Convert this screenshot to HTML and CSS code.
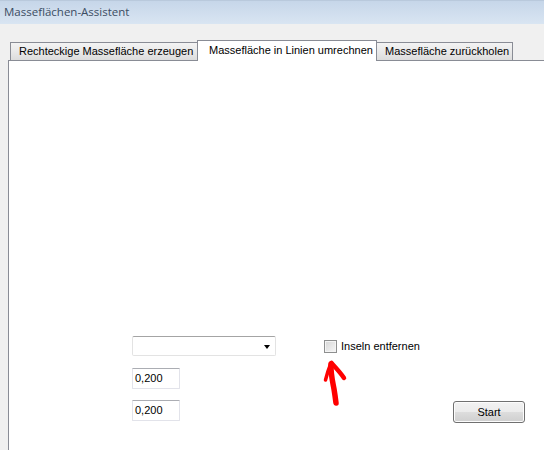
FILE: index.html
```html
<!DOCTYPE html>
<html>
<head>
<meta charset="utf-8">
<link rel="stylesheet" href="styles.css">
</head>
<body>
<div class="titlebar">Masseflächen-Assistent</div>
<div class="tabs">
  <div class="tabrow">
    <div class="tab first">Rechteckige Massefläche erzeugen</div>
    <div class="tab active">Massefläche in Linien umrechnen</div>
    <div class="tab">Massefläche zurückholen</div>
  </div>
  <div class="panel">
    <div class="form">
      <div class="combo"><span class="caret"></span></div>
      <label class="check"><span class="box"></span>Inseln entfernen</label>
      <div class="field r2">0,200</div>
      <div class="field r3">0,200</div>
      <div class="btn">Start</div>
    </div>
    <svg class="arrow" width="30" height="50" viewBox="0 0 30 50">
      <path d="M8 5 C7.5 14 9.5 22 11 30 C12 36 12.5 40 13 44" fill="none" stroke="#ff0000" stroke-width="5.5" stroke-linecap="round"/>
      <path d="M8 4 C6 9 4 15 2.5 21" fill="none" stroke="#ff0000" stroke-width="3.5" stroke-linecap="round"/>
      <path d="M8.5 4 C12 8 17 13 21 19" fill="none" stroke="#ff0000" stroke-width="4.5" stroke-linecap="round"/>
    </svg>
  </div>
</div>
</body>
</html>
```

FILE: styles.css
```css
html, body {
  margin: 0;
  padding: 0;
  height: 100%;
  overflow: hidden;
}
body {
  background: #f0f0f0;
  font-family: "Liberation Sans", Arial, sans-serif;
  font-size: 11px;
  color: #000;
  display: flex;
  flex-direction: column;
}
.titlebar {
  height: 24px;
  box-sizing: border-box;
  border-top: 1px solid #b9c9dc;
  background: linear-gradient(#c6d6e9, #d9e5f2);
  color: #3c4d63;
  font-family: "Open Sans", sans-serif;
  font-size: 11.5px;
  line-height: 22px;
  padding-left: 4px;
}
.tabs {
  flex: 1;
  display: flex;
  flex-direction: column;
  padding-top: 16px;
  padding-left: 8px;
}
.tabrow {
  display: flex;
  align-items: flex-end;
  padding-left: 2px;
  position: relative;
  z-index: 1;
  margin-bottom: -1px;
}
.tab {
  height: 18px;
  box-sizing: border-box;
  border: 1px solid #898c95;
  border-bottom: none;
  background: linear-gradient(#f3f3f3, #e9e9e9 50%, #dcdcdc);
  padding: 0 6px 0 8px;
  line-height: 17px;
  margin-bottom: 1px;
  white-space: nowrap;
}
.tab.first { width: 188px; }
.tab + .tab { border-left: none; }
.tab.active {
  background: #fff;
  height: 21px;
  margin-bottom: 0;
  width: 180px;
  padding: 2px 0 0 11px;
  border-left: 1px solid #898c95;
  margin-left: -1px;
  line-height: 15px;
}
.tab.active + .tab { width: 136px; padding-left: 8px; }
.panel {
  flex: 1;
  background: #fff;
  border-left: 1px solid #898c95;
  border-top: 1px solid #898c95;
  padding: 275px 0 0 123px;
  position: relative;
}
.form {
  display: grid;
  grid-template-columns: 144px 81px 72px;
  grid-template-rows: 20px 21px 22px;
  column-gap: 48px;
  row-gap: 12px;
}
.combo {
  grid-column: 1;
  grid-row: 1;
  box-sizing: border-box;
  border: 1px solid #e3e3e3;
  border-top-color: #a4a4a4;
  border-radius: 2px;
  background: #fff;
  position: relative;
}
.caret {
  position: absolute;
  right: 5px;
  top: 8px;
  width: 0;
  height: 0;
  border-left: 3.5px solid transparent;
  border-right: 3.5px solid transparent;
  border-top: 4px solid #000;
}
.check {
  grid-column: 2 / 4;
  grid-row: 1;
  display: flex;
  align-items: center;
  gap: 4px;
  padding-top: 2px;
  align-self: start;
  line-height: 13px;
  height: 17px;
}
.box {
  width: 13px;
  height: 13px;
  box-sizing: border-box;
  border: 1px solid #8e8f8f;
  background: linear-gradient(135deg, #d6d6d6, #f6f6f6);
  box-shadow: inset 0 0 0 1px #f4f4f4;
}
.field {
  grid-column: 1;
  width: 48px;
  box-sizing: border-box;
  border: 1px solid #e2e3ea;
  border-top-color: #abadb3;
  border-radius: 1px;
  background: #fff;
  padding-left: 2px;
  line-height: 19px;
}
.r2 { grid-row: 2; }
.r3 { grid-row: 3; margin-top: -1px; height: 21px; }
.btn {
  grid-column: 3;
  grid-row: 3;
  box-sizing: border-box;
  height: 22px;
  border: 1px solid #707070;
  border-radius: 3px;
  background: linear-gradient(#f2f2f2, #ebebeb 50%, #dddddd 50%, #cfcfcf);
  box-shadow: inset 0 0 0 1px #fcfcfc;
  text-align: center;
  line-height: 20px;
}
.arrow {
  position: absolute;
  left: 314px;
  top: 298px;
}
```
